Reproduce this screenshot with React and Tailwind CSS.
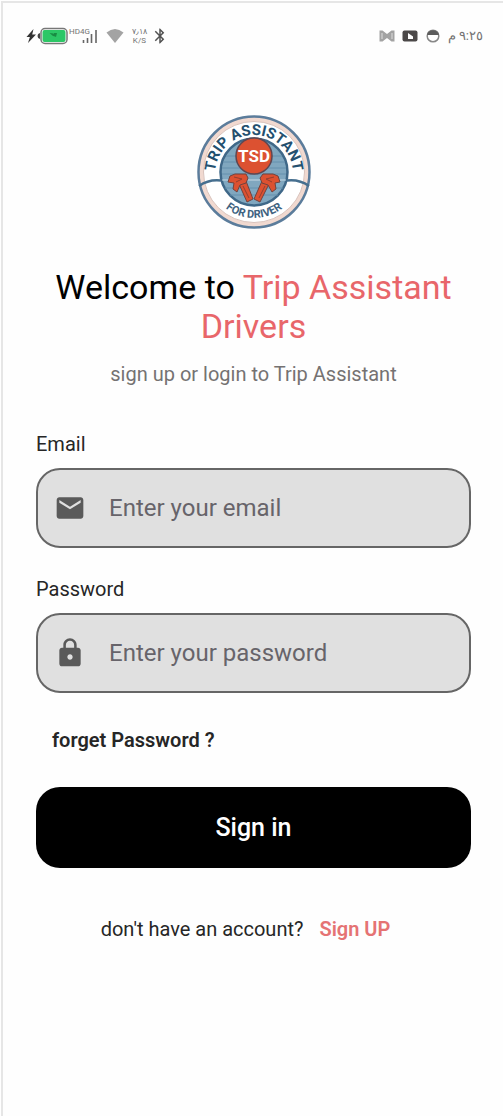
import { MdEmail, MdLock, MdBluetooth } from "react-icons/md";

function StatusBar() {
  return (
    <header className="flex h-[30px] items-center justify-between pr-5 pl-[22px] text-neutral-500">
      <div className="flex items-center">
        <svg className="h-4 w-3" viewBox="0 0 12 16" aria-hidden="true">
          <path d="M8.500 1 1.500 9h3.400L3 15l8-8.600H7.200z" fill="#333" />
        </svg>
        <svg className="h-[18px] w-8" viewBox="0 0 32 18" aria-hidden="true">
          <path d="M3 6Q0.500 6.500 0.500 9T3 12z" fill="#444" />
          <rect x="4" y="1.500" width="26" height="15" rx="4" fill="#fff" stroke="#777" strokeWidth="1.500" />
          <rect x="5.500" y="3" width="23" height="12" rx="2" fill="#2cc766" />
          <path d="M12.500 6l4 .5 1.500 3-2-.5zM17 6h3l-1 4-2-1z" fill="#198c43" />
        </svg>
        <div className="flex h-[18px] items-start">
          <span className="text-[8px] leading-[9px]">HD4G</span>
        </div>
        <svg className="-ml-2 h-[18px] w-4" viewBox="0 0 16 18" aria-hidden="true">
          <path d="M1.500 13v3M5.500 11v5M9.500 7v9M14 3v13" stroke="#666" strokeWidth="1.600" />
        </svg>
        <svg className="ml-2 h-4 w-[18px]" viewBox="0 0 18 16" aria-hidden="true">
          <path d="M0.500 4.500Q9-2.500 17.500 4.500L9 15z" fill="#a3a3a3" />
        </svg>
        <div className="ml-2 flex flex-col items-center text-[8px] leading-[9px]">
          <span>٧٫١٨</span>
          <span>K/S</span>
        </div>
        <MdBluetooth className="ml-1 size-[18px] text-neutral-600" aria-hidden="true" />
      </div>
      <div className="flex items-center">
        <svg className="h-3 w-4" viewBox="0 0 16 12" aria-hidden="true">
          <path d="M.5.500h3L8 4l4.500-3.500h3v11h-3L8 8l-4.500 3.500h-3z" fill="#a3a3a3" />
          <path d="M3 3v6M13 3v6" stroke="#ddd" />
        </svg>
        <svg className="ml-[7px] h-3 w-4" viewBox="0 0 16 12" aria-hidden="true">
          <rect x=".5" y=".5" width="15" height="11" rx="2" fill="#4b4848" />
          <path d="M6 3v6h5V6.500z" fill="#fff" />
        </svg>
        <svg className="ml-2 size-[14px]" viewBox="0 0 14 14" aria-hidden="true">
          <circle cx="7" cy="7" r="5.800" fill="#fff" stroke="#888" strokeWidth="1.500" />
          <path d="M1 6a6.200 6.200 0 0 1 12 0z" fill="#5c5c5c" />
        </svg>
        <span className="ml-2 text-[13px] leading-4" dir="rtl">٩:٢٥ م</span>
      </div>
    </header>
  );
}

function Logo() {
  return (
    <svg className="mx-auto h-[116px] w-[116px]" viewBox="0 0 116 116" role="img" aria-label="Trip Assistant for Driver">
      <defs>
        <path id="arc-top" d="M19 60A39 39 0 0 1 97 60" />
        <path id="arc-bottom" d="M12 58A46 46 0 0 0 104 58" />
      </defs>
      <circle cx="58" cy="58" r="55.500" fill="#f1d9d0" stroke="#5b7c9b" strokeWidth="2.500" />
      <circle cx="58" cy="58" r="50.500" fill="#fff" stroke="#d9c3bc" strokeWidth="1" />
      <circle cx="58" cy="58" r="33.500" fill="#80a7bf" stroke="#3f6888" strokeWidth="2.500" />
      <path d="M30 42h56M27 48h62M26 54h64M26 60h64M29 74h58M34 81h48" stroke="#6590ad" strokeWidth="1" />
      <path d="M3 72Q13 65 25 66.500M113 72Q103 65 91 66.500" fill="none" stroke="#466f8f" strokeWidth="2.500" />
      <path d="M26 66h64" stroke="#c5dae5" strokeWidth="1.200" />
      <circle cx="58" cy="42" r="18" fill="#dc5131" stroke="#5d4651" strokeWidth="1.500" />
      <g fill="#dc5131" stroke="#70433f" strokeWidth="1" strokeLinejoin="round">
        <path d="M43 70l7-3 7 18-6 3z" />
        <path d="M34 62l5-2h11l2 4-2 5-6 2-3 7-4-3 1-6-6-1z" />
        <path d="M73 70l-7-3-8 18 6 3z" />
        <path d="M82 62l-5-2H67l-3 4 2 5 6 2 4 7 4-3-1-6 5-1z" />
      </g>
      <path d="M38 63l8 2-6 3M78 63l-8 2 6 3M47 72l6 12M69 72l-6 12" fill="none" stroke="#923f30" strokeWidth="1" />
      <text x="58" y="48" textAnchor="middle" fill="#fff" className="font-['Roboto',sans-serif] text-[17px] font-bold">TSD</text>
      <text fill="#24506f" className="font-['Roboto',sans-serif] text-[15px] font-bold">
        <textPath href="#arc-top" startOffset="50%" textAnchor="middle">TRIP ASSISTANT</textPath>
      </text>
      <text fill="#3e6280" className="font-['Roboto',sans-serif] text-[11px] font-bold">
        <textPath href="#arc-bottom" startOffset="50%" textAnchor="middle">FOR DRIVER</textPath>
      </text>
    </svg>
  );
}

function Field({ id, label, type, placeholder, icon: Icon }) {
  return (
    <div>
      <label htmlFor={id} className="block text-xl leading-6 text-neutral-800">{label}</label>
      <div className="mt-3 flex h-20 items-center rounded-3xl border-2 border-[#666] bg-[#e0e0e0] pl-4">
        <Icon className="size-8 shrink-0 text-[#5a5a5a]" aria-hidden="true" />
        <input
          id={id}
          type={type}
          placeholder={placeholder}
          className="ml-[23px] h-full min-w-0 flex-1 bg-transparent pr-4 text-2xl text-neutral-800 outline-none placeholder:text-[#67646a]"
        />
      </div>
    </div>
  );
}

export default function App() {
  return (
    <div className="flex min-h-screen flex-col bg-white pt-px pl-px">
      <div className="flex-1 border-t-2 border-l-2 border-[#e6e6e6] bg-[#fefefe] pt-[18px] pb-8 font-['Roboto','Noto_Sans',sans-serif]">
        <StatusBar />
        <main className="pt-[63px] pr-8 pl-[33px]">
          <Logo />
          <h1 className="mt-[38px] text-center text-[34px] leading-[39px] text-black">
            Welcome to <span className="text-[#e8666a]">Trip Assistant Drivers</span>
          </h1>
          <p className="mt-4 text-center text-xl leading-6 text-[#757272]">sign up or login to Trip Assistant</p>
          <form className="mt-[46px]" onSubmit={(e) => e.preventDefault()}>
            <div className="flex flex-col gap-[29px]">
              <Field id="email" label="Email" type="email" placeholder="Enter your email" icon={MdEmail} />
              <Field id="password" label="Password" type="password" placeholder="Enter your password" icon={MdLock} />
            </div>
            <a href="#forgot" className="mt-[35px] ml-4 block w-fit text-xl leading-6 font-semibold text-neutral-800">forget Password ?</a>
            <button type="submit" className="mt-[35px] h-[81px] w-full rounded-3xl bg-black text-[25px] font-medium text-white">Sign in</button>
          </form>
          <p className="mt-[49px] flex justify-center gap-4 pr-4 text-xl leading-6 text-neutral-800">
            <span>don't have an account?</span>
            <a href="#signup" className="font-semibold text-[#e57373]">Sign UP</a>
          </p>
        </main>
      </div>
    </div>
  );
}
